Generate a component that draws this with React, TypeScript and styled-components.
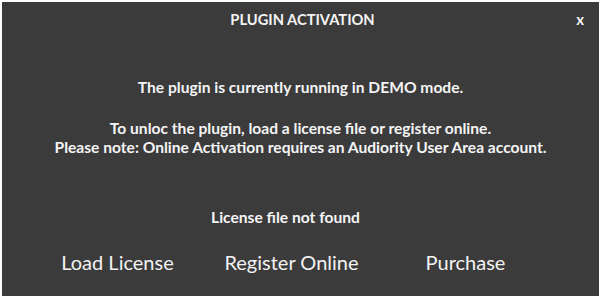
import React from "react";
import styled, { createGlobalStyle } from "styled-components";

const Global = createGlobalStyle`
  html, body { margin: 0; padding: 0; background: #ffffff; }
  body { width: 603px; height: 300px; overflow: hidden; }
`;

const Frame = styled.div`
  box-sizing: border-box;
  width: 603px;
  height: 300px;
  padding: 2px 4px 4px 2px;
  background: #ffffff;
`;

const Panel = styled.div`
  box-sizing: border-box;
  height: 100%;
  background: #3b3b3c;
  color: #f4f4f4;
  font-family: Lato, "Open Sans", sans-serif;
  display: flex;
  flex-direction: column;
  align-items: center;
`;

const Header = styled.div`
  position: relative;
  width: 100%;
  height: 34px;
  display: flex;
  align-items: center;
  justify-content: center;
`;

const Title = styled.div`
  font-weight: 700;
  font-size: 14.7px;
  padding-left: 4px;
`;

const Close = styled.div`
  position: absolute;
  right: 15px;
  top: 8px;
  font-weight: 700;
  font-size: 15px;
`;

const Line = styled.div<{ $top: number; $shift?: number }>`
  margin-top: ${(p) => p.$top}px;
  margin-right: ${(p) => (p.$shift ?? 0) * 2}px;
  font-weight: 700;
  font-size: 15.6px;
  line-height: 19px;
  text-align: center;
  white-space: nowrap;
`;

const Buttons = styled.div`
  margin-top: 23px;
  width: 522px;
  margin-right: 18px;
  display: grid;
  grid-template-columns: repeat(3, 1fr);
`;

const Button = styled.div`
  text-align: center;
  font-size: 20px;
  line-height: 24px;
  font-weight: 400;
  color: #f2f2f2;
`;

export default function App() {
  return (
    <>
      <Global />
      <Frame>
        <Panel>
          <Header>
            <Title>PLUGIN ACTIVATION</Title>
            <Close>x</Close>
          </Header>
          <Line $top={42}>The plugin is currently running in DEMO mode.</Line>
          <Line $top={22}>To unloc the plugin, load a license file or register online.</Line>
          <Line $top={0}>Please note: Online Activation requires an Audiority User Area account.</Line>
          <Line $top={51} $shift={15}>License file not found</Line>
          <Buttons>
            <Button>Load License</Button>
            <Button>Register Online</Button>
            <Button>Purchase</Button>
          </Buttons>
        </Panel>
      </Frame>
    </>
  );
}
